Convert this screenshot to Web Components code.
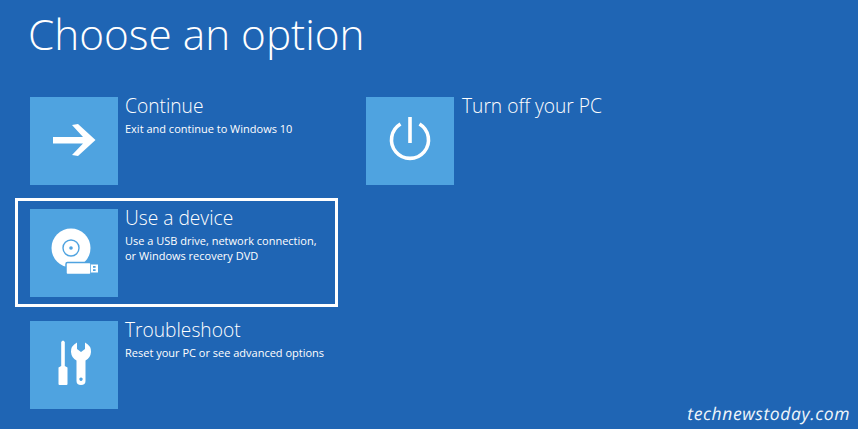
<!DOCTYPE html>
<html>
<head>
<meta charset="utf-8">
<style>
  html, body { margin: 0; height: 100%; }
  body { background: #1f65b4; overflow: hidden; font-family: "Open Sans", "Noto Sans", sans-serif; color: #fff; }
</style>
</head>
<body>
<choose-screen heading="Choose an option">
  <option-tile slot="left" label="Continue" desc="Exit and continue to Windows 10">
    <svg viewBox="0 0 88 88" width="88" height="88"><polygon fill="#fff" points="23,40 53,40 42,28 48,27 65.500,43 48,59 42,58 53,46.500 23,46.500"/></svg>
  </option-tile>
  <option-tile slot="left" label="Use a device" desc="Use a USB drive, network connection,<br>or Windows recovery DVD" focused>
    <svg viewBox="0 0 88 88" width="88" height="88">
      <circle cx="41" cy="39" r="19.500" fill="#fff"/>
      <circle cx="41" cy="39" r="8" fill="none" stroke="#4fa3e0" stroke-width="1.400"/>
      <circle cx="41" cy="39" r="1.800" fill="#4fa3e0"/>
      <rect x="36" y="53.500" width="25" height="12" rx="1.500" fill="#fff" stroke="#4fa3e0" stroke-width="1.500"/>
      <rect x="61" y="55.500" width="7" height="8" fill="#fff"/>
      <rect x="63" y="57" width="2.600" height="1.800" fill="#4fa3e0"/>
      <rect x="63" y="60.200" width="2.600" height="1.800" fill="#4fa3e0"/>
    </svg>
  </option-tile>
  <option-tile slot="left" label="Troubleshoot" desc="Reset your PC or see advanced options">
    <svg viewBox="0 0 88 88" width="88" height="88">
      <path fill="#fff" d="M31.200 21 Q33 18 34.800 21 L34.800 45 L37.500 46.500 L37.500 63 Q37.500 64 36.500 64 L29.500 64 Q28.500 64 28.500 63 L28.500 46.500 L31.200 45 Z"/>
      <path fill="#fff" fill-rule="evenodd" d="M47 21.500 L47 28 L51 31 L55 28 L55 21.500 Q61.500 25 61 31 Q60.500 37 55.500 39.500 L55.500 60 Q55.500 64 51 64 Q46.500 64 46.500 60 L46.500 39.500 Q41.500 37 41 31 Q40.500 25 47 21.500 Z M51 56.500 a1.700 1.700 0 1 0 0.010 0 Z"/>
    </svg>
  </option-tile>
  <option-tile slot="right" label="Turn off your PC">
    <svg viewBox="0 0 88 88" width="88" height="88">
      <path fill="none" stroke="#fff" stroke-width="3.600" d="M34.500 27 A18.500 18.500 0 1 0 53.500 27"/>
      <rect x="42.200" y="20" width="3.600" height="26" fill="#fff"/>
    </svg>
  </option-tile>
</choose-screen>
<script>
class OptionTile extends HTMLElement {
  constructor() {
    super();
    const shadow = this.attachShadow({ mode: 'open' });
    const label = this.getAttribute('label') || '';
    const desc = this.getAttribute('desc') || '';
    shadow.innerHTML = `
      <style>
        :host {
          display: flex;
          gap: 7px;
          width: 293px;
          padding: 8px 12px 7px;
        }
        :host([slot="right"]) { gap: 8px; }
        :host([focused]) { outline: 3px solid #fff; }
        .tile {
          flex: none;
          width: 88px;
          height: 88px;
          background: #4fa3e0;
        }
        ::slotted(svg) { display: block; }
        h2 {
          margin: -4px 0 0;
          font-size: 19.200px;
          line-height: 26px;
          font-weight: 300;
        }
        p {
          margin: 2px 0 0;
          font-size: 11px;
          line-height: 15px;
          font-weight: 400;
          white-space: nowrap;
        }
      </style>
      <div class="tile"><slot></slot></div>
      <div>
        <h2>${label}</h2>
        <p>${desc}</p>
      </div>
    `;
  }
}

class ChooseScreen extends HTMLElement {
  constructor() {
    super();
    const shadow = this.attachShadow({ mode: 'open' });
    const heading = this.getAttribute('heading') || '';
    shadow.innerHTML = `
      <style>
        :host {
          display: block;
          position: relative;
          height: 429px;
          padding: 0 0 0 18px;
          box-sizing: border-box;
        }
        h1 {
          margin: 0 0 0 10px;
          height: 89px;
          font-size: 42.300px;
          line-height: 68px;
          font-weight: 300;
        }
        .columns {
          display: grid;
          grid-template-columns: 336px 1fr;
        }
        .col {
          display: flex;
          flex-direction: column;
          gap: 9px;
        }
        .mark {
          position: absolute;
          right: 8px;
          bottom: 3px;
          font: italic 500 17.500px "Open Sans", sans-serif;
          letter-spacing: 0.6px;
          text-rendering: geometricPrecision;
          color: #eef5fb;
        }
      </style>
      <h1>${heading}</h1>
      <div class="columns">
        <div class="col"><slot name="left"></slot></div>
        <div class="col"><slot name="right"></slot></div>
      </div>
      <div class="mark">technewstoday.com</div>
    `;
  }
}

customElements.define('option-tile', OptionTile);
customElements.define('choose-screen', ChooseScreen);
</script>
</body>
</html>
